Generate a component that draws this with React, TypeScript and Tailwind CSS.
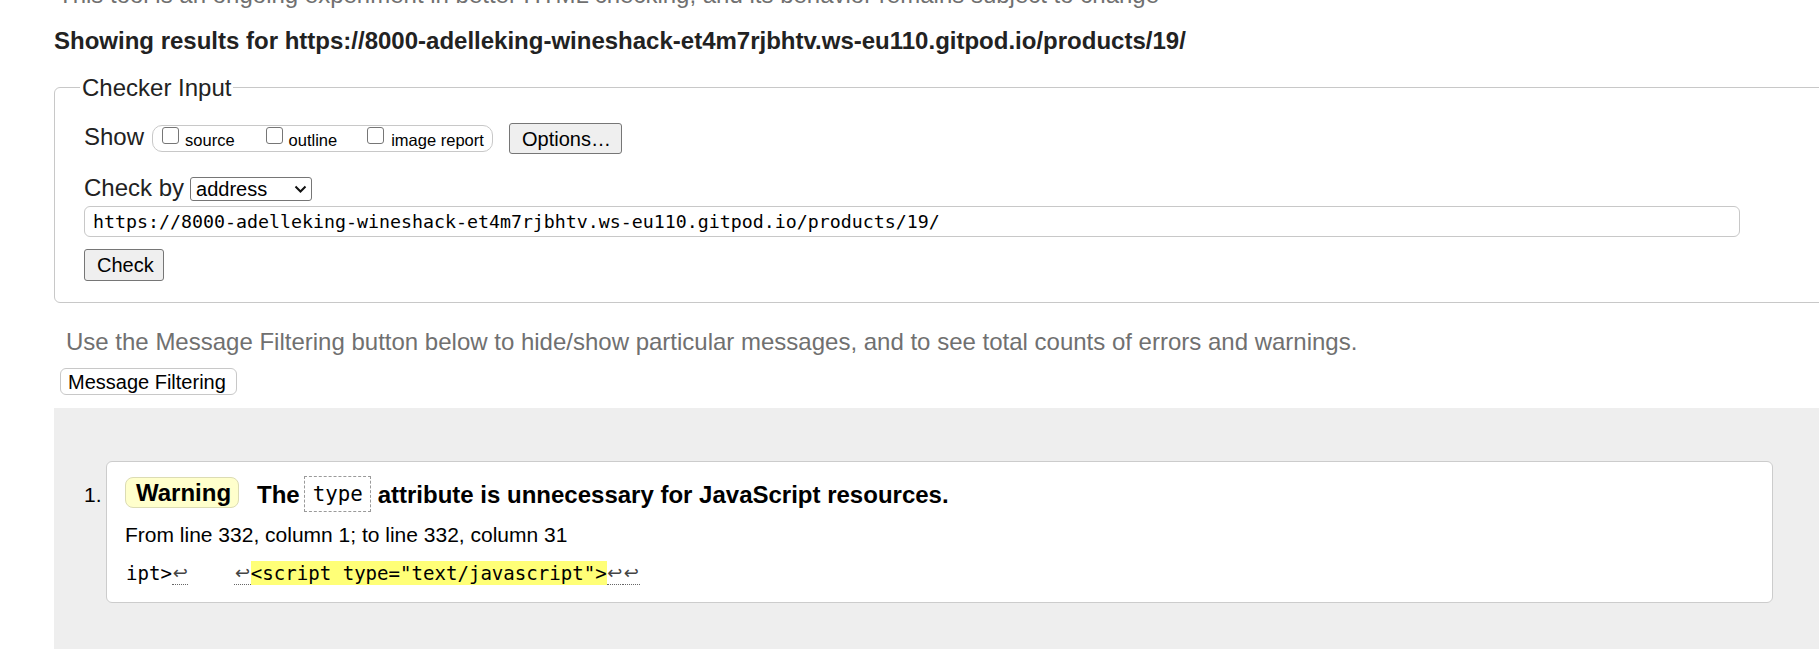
import React from "react";

const Cb = () => (
  <span className="mt-[1px] inline-block w-[17px] h-[17px] shrink-0 border-[1.5px] border-[#767676] rounded-[3px] bg-white" />
);

const Lf = () => (
  <span className="inline-block w-[16.5px] h-[24px] text-center border-b border-dotted border-[#666] text-[#444] font-['DejaVu_Sans',sans-serif] text-[18px] leading-[24px]">
    ↩
  </span>
);

export default function App() {
  return (
    <div className="w-[1819px] h-[649px] overflow-hidden bg-white text-[#222] font-['Liberation_Sans',Arial,sans-serif]">
      <div className="pl-[54px]">
        <p className="mt-[-19px] ml-[4px] text-[24px] leading-[27px] text-[#707070] whitespace-nowrap">
          This tool is an ongoing experiment in better HTML checking, and its behavior remains subject to change
        </p>
        <h2 className="mt-[18.5px] text-[24px] leading-[27px] font-bold whitespace-nowrap">
          Showing results for https://8000-adelleking-wineshack-et4m7rjbhtv.ws-eu110.gitpod.io/products/19/
        </h2>

        <fieldset className="mt-[20px] w-[1800px] border border-[#c8c8c8] rounded-[6px] pl-[29px] pt-[22.5px] pb-[21px]">
          <legend className="ml-[-4px] px-[2px] text-[24px] leading-[27px]">Checker Input</legend>

          <div className="flex items-start h-[31px]">
            <span className="text-[24px] leading-[27px]">Show</span>
            <div className="ml-[8px] mt-[2px] w-[341px] h-[27px] border border-[#c8c8c8] rounded-[10px] flex items-start pl-[9px] text-[16.5px] leading-[20px] text-black">
              <Cb />
              <span className="ml-[6px] mt-[4px]">source</span>
              <span className="ml-[31px]"><Cb /></span>
              <span className="ml-[6px] mt-[4px]">outline</span>
              <span className="ml-[30px]"><Cb /></span>
              <span className="ml-[7px] mt-[4px] whitespace-nowrap">image report</span>
            </div>
            <button className="ml-[16px] w-[113px] h-[31px] bg-[#efefef] border border-[#767676] rounded-[3px] flex items-center pl-[12px] text-[20px] text-black">
              Options…
            </button>
          </div>

          <div className="mt-[20px] flex items-start">
            <span className="text-[24px] leading-[27px]">Check by</span>
            <div className="ml-[6px] mt-[3px] w-[122px] h-[24px] border border-[#767676] rounded-[3px] flex items-center pl-[5px] text-[20px] text-black bg-white">
              address
              <svg className="ml-auto mr-[4px]" width="13" height="8" viewBox="0 0 13 8" fill="none">
                <path d="M1.5 1.5 L6.5 6.5 L11.5 1.5" stroke="#111" strokeWidth="2" />
              </svg>
            </div>
          </div>

          <div className="mt-[5px] w-[1656px] h-[31px] border border-[#c8c8c8] rounded-[6px] flex items-center pl-[8px] text-black font-['DejaVu_Sans_Mono',monospace] text-[18.27px] whitespace-nowrap">
            https://8000-adelleking-wineshack-et4m7rjbhtv.ws-eu110.gitpod.io/products/19/
          </div>

          <button className="mt-[12px] w-[80px] h-[32px] bg-[#efefef] border border-[#767676] rounded-[3px] flex items-center pl-[12px] text-[20px] text-black">
            Check
          </button>
        </fieldset>

        <p className="mt-[25px] ml-[12px] text-[24px] leading-[27px] text-[#707070] whitespace-nowrap">
          Use the Message Filtering button below to hide/show particular messages, and to see total counts of errors and warnings.
        </p>

        <button className="mt-[13px] ml-[6px] w-[177px] h-[27px] bg-white border border-[#c8c8c8] rounded-[6px] flex items-center pl-[7px] text-[20px] text-black">
          Message Filtering
        </button>

        <div className="mt-[13px] w-[1800px] h-[260px] bg-[#eeeeee] pt-[53px] flex items-start">
          <div className="w-[52px] shrink-0 pl-[30px] pt-[21.7px] text-[21px] leading-[24px] text-black">1.</div>
          <div className="w-[1667px] shrink-0 bg-white border border-[#cccccc] rounded-[6px] pt-[14px] pb-[17px] pl-[18px] text-black">
            <div className="flex items-center h-[36px]">
              <span className="mb-[3px] w-[114px] h-[31px] shrink-0 bg-[#ffffcc] border border-[#dcdcb4] rounded-[8px] flex items-center pl-[10px] text-[24px] leading-[27px] font-bold">
                Warning
              </span>
              <span className="ml-[18px] text-[24px] leading-[27px] font-bold">The</span>
              <span className="ml-[4px] w-[67px] h-[36px] shrink-0 border border-dashed border-[#9a9a9a] flex items-center pl-[8px] font-['DejaVu_Sans_Mono',monospace] text-[20.8px] leading-[24px]">
                type
              </span>
              <span className="ml-[7px] text-[24px] leading-[27px] font-bold whitespace-nowrap">
                attribute is unnecessary for JavaScript resources.
              </span>
            </div>
            <p className="mt-[10.7px] text-[21px] leading-[24px]">From line 332, column 1; to line 332, column 31</p>
            <div className="mt-[14.3px] h-[24px] flex items-start font-['DejaVu_Sans_Mono',monospace] text-[19.07px] leading-[24px] whitespace-pre">
              <span className="ml-[1px]">ipt&gt;</span>
              <Lf />
              <span>{"    "}</span>
              <Lf />
              <span className="bg-[#ffff77] h-[24px]">&lt;script type="text/javascript"&gt;</span>
              <Lf />
              <Lf />
            </div>
          </div>
        </div>
      </div>
    </div>
  );
}
